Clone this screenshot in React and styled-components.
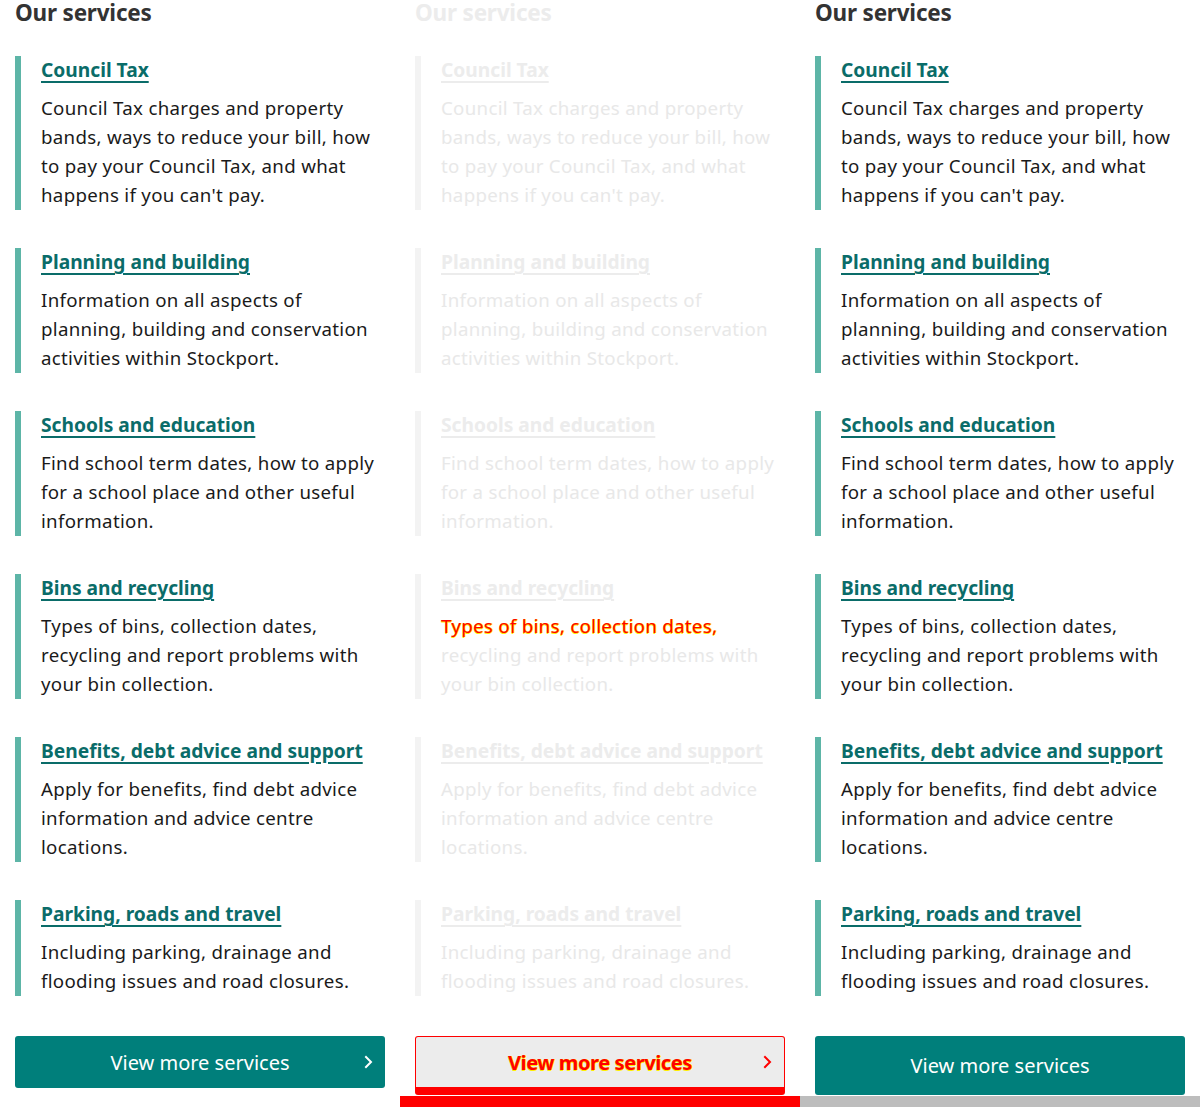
import React from 'react';
import styled, { createGlobalStyle, css } from 'styled-components';

const GlobalStyle = createGlobalStyle`
  html, body {
    margin: 0;
    padding: 0;
    background: #fff;
  }
  body {
    font-family: "Noto Sans", "Open Sans", sans-serif;
  }
`;

const services = [
  {
    title: 'Council Tax',
    text: "Council Tax charges and property bands, ways to reduce your bill, how to pay your Council Tax, and what happens if you can't pay.",
  },
  {
    title: 'Planning and building',
    text: 'Information on all aspects of planning, building and conservation activities within Stockport.',
  },
  {
    title: 'Schools and education',
    text: 'Find school term dates, how to apply for a school place and other useful information.',
  },
  {
    title: 'Bins and recycling',
    text: 'Types of bins, collection dates, recycling and report problems with your bin collection.',
    changed: 'Types of bins, collection dates,',
    rest: 'recycling and report problems with your bin collection.',
  },
  {
    title: 'Benefits, debt advice and support',
    text: 'Apply for benefits, find debt advice information and advice centre locations.',
  },
  {
    title: 'Parking, roads and travel',
    text: 'Including parking, drainage and flooding issues and road closures.',
  },
];

const Page = styled.div`
  display: grid;
  grid-template-columns: repeat(3, 400px);
  width: 1200px;
  height: 1107px;
  overflow: hidden;
`;

const Column = styled.section`
  display: flex;
  flex-direction: column;
  padding: 0 15px;
  position: relative;
`;

const Heading = styled.h2`
  margin: -3px 0 0;
  font-size: 22.5px;
  line-height: 32px;
  font-weight: 700;
  letter-spacing: -0.2px;
  color: ${p => (p.$faded ? '#ececec' : '#333')};
`;

const List = styled.ul`
  list-style: none;
  margin: 27px 0 0;
  padding: 0;
  display: flex;
  flex-direction: column;
  gap: 38px;
`;

const Item = styled.li`
  border-left: 6px solid ${p => (p.$faded ? '#f3f3f3' : '#5db5a7')};
  padding-left: 20px;
`;

const Title = styled.a`
  display: inline-block;
  font-size: 19.2px;
  line-height: 28px;
  font-weight: 700;
  color: ${p => (p.$faded ? '#ececec' : '#0a6c69')};
  text-decoration: underline;
  text-underline-offset: 4px;
  text-decoration-thickness: 2px;
  margin-bottom: 10px;
`;

const Text = styled.p`
  margin: -1px 0 1px;
  max-width: 338px;
  font-size: 18.7px;
  letter-spacing: 0.3px;
  line-height: 29px;
  color: ${p => (p.$faded ? '#e8e8e8' : '#1a1a1a')};
`;

const diffInk = css`
  color: #ff0000;
  text-shadow: 1px 0 0 #ffee00, 0 1px 0 #ffee00;
`;

const Changed = styled.span`
  ${diffInk};
`;

const Button = styled.a`
  margin-top: 40px;
  height: ${p => (p.$tall ? '59px' : '52px')};
  display: flex;
  align-items: center;
  justify-content: center;
  position: relative;
  border-radius: 3px;
  font-size: 20px;
  color: #fff;
  background: #007f7b;
  text-decoration: none;
  box-sizing: border-box;
  ${p => p.$diff && css`
    background: #ececec;
    border: 1px solid #ff0000;
    border-bottom: 8px solid #ff0000;
    height: 59px;
    font-weight: 700;
    letter-spacing: -0.4px;
    ${diffInk};
  `}
`;

const Chevron = styled.span`
  position: absolute;
  right: 10px;
  top: 50%;
  transform: translateY(-50%);
  display: flex;
`;

const Strip = styled.div`
  position: absolute;
  left: 0;
  right: 0;
  bottom: 0;
  height: 11px;
  background: ${p => p.$color};
`;

const ChevronIcon = ({ color = '#fff' }) => (
  <svg width="12" height="14" viewBox="0 0 12 14" fill="none">
    <path d="M3 2l5 5-5 5" stroke={color} strokeWidth="2" strokeLinecap="square" />
  </svg>
);

const ServicesColumn = ({ variant }) => {
  const faded = variant === 'diff';
  return (
    <Column>
      <Heading $faded={faded}>Our services</Heading>
      <List>
        {services.map(s => (
          <Item key={s.title} $faded={faded}>
            <Title href="#" $faded={faded}>{s.title}</Title>
            {faded && s.changed ? (
              <Text $faded>
                <Changed>{s.changed}</Changed> {s.rest}
              </Text>
            ) : (
              <Text $faded={faded}>{s.text}</Text>
            )}
          </Item>
        ))}
      </List>
      <Button href="#" $diff={faded} $tall={variant === 'actual'}>
        View more services
        {variant !== 'actual' && (
          <Chevron>
            <ChevronIcon color={faded ? '#ff0000' : '#fff'} />
          </Chevron>
        )}
      </Button>
      {faded && <Strip $color="#ff0000" />}
      {variant === 'actual' && <Strip $color="#bdbdbd" />}
    </Column>
  );
};

export default function App() {
  return (
    <>
      <GlobalStyle />
      <Page>
        <ServicesColumn variant="expected" />
        <ServicesColumn variant="diff" />
        <ServicesColumn variant="actual" />
      </Page>
    </>
  );
}
